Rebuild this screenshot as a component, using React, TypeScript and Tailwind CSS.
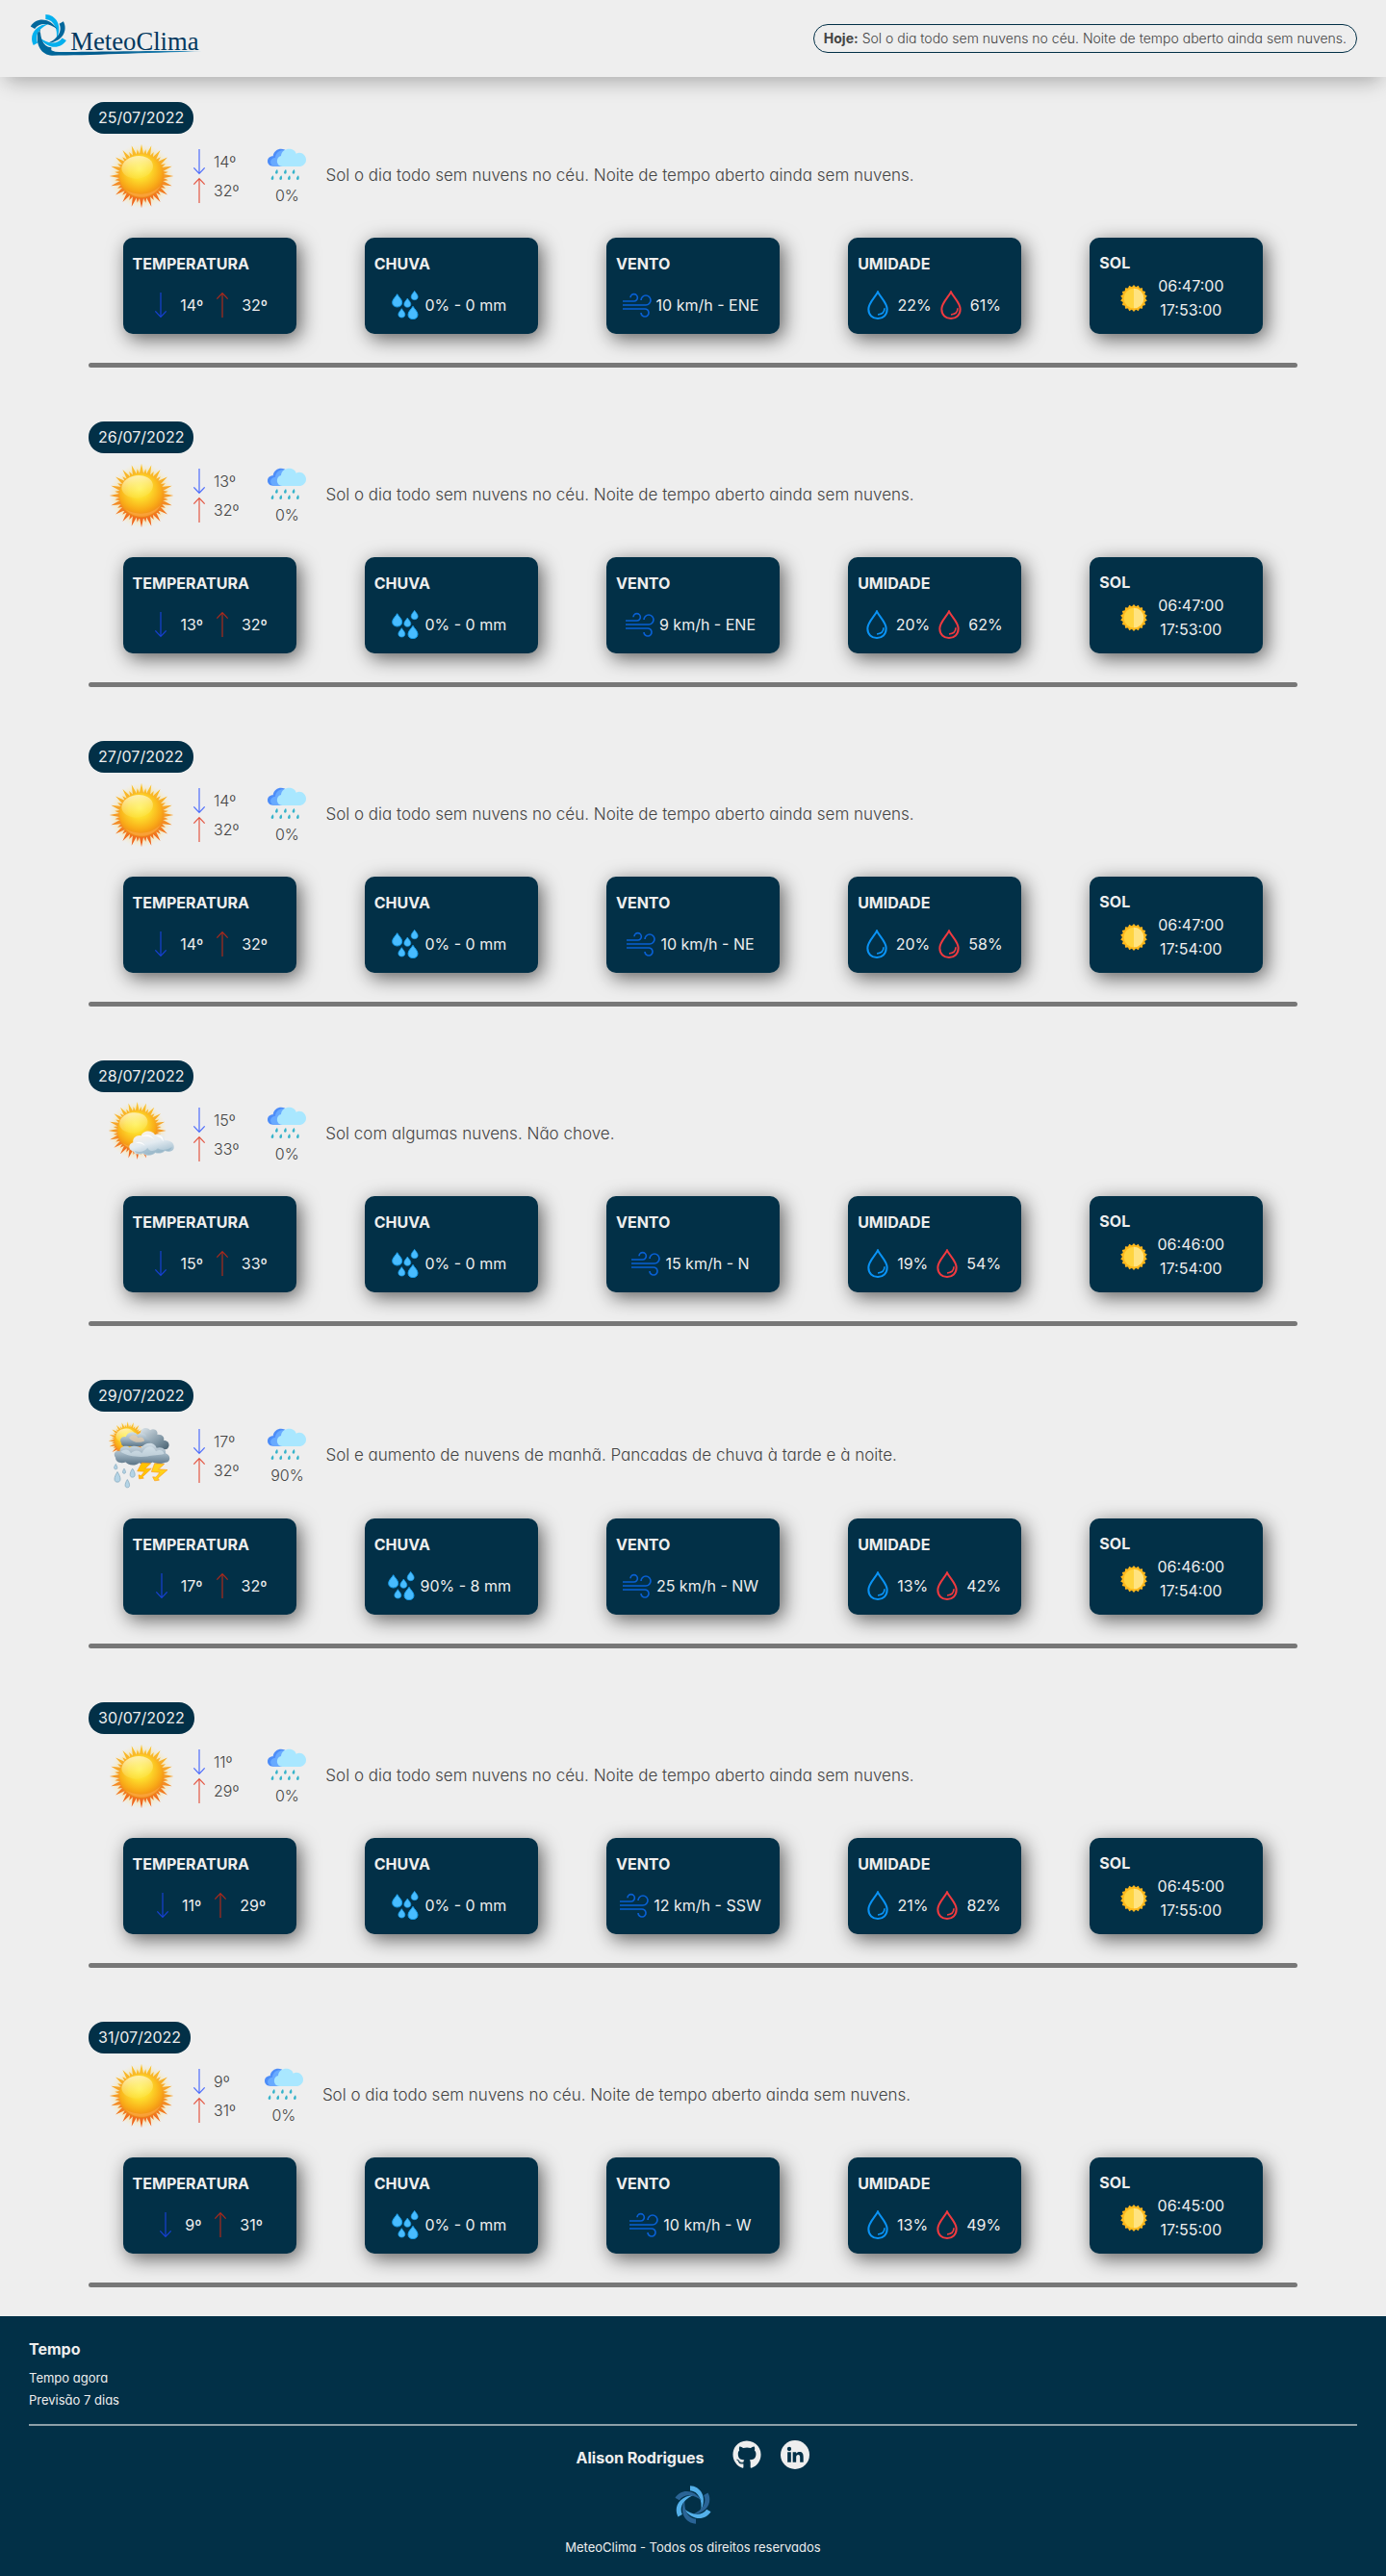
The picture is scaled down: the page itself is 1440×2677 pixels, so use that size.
import { FaGithub } from "react-icons/fa";

type Sky = "sun" | "cloudy" | "storm";
type Day = {
  date: string;
  sky: Sky;
  min: string;
  max: string;
  chance: string;
  rain: string;
  text: string;
  wind: string;
  humMin: string;
  humMax: string;
  sunrise: string;
  sunset: string;
};

const CLEAR = "Sol o dia todo sem nuvens no céu. Noite de tempo aberto ainda sem nuvens.";

const days: Day[] = [
  { date: "25/07/2022", sky: "sun", min: "14º", max: "32º", chance: "0%", rain: "0 mm", text: CLEAR, wind: "10 km/h - ENE", humMin: "22%", humMax: "61%", sunrise: "06:47:00", sunset: "17:53:00" },
  { date: "26/07/2022", sky: "sun", min: "13º", max: "32º", chance: "0%", rain: "0 mm", text: CLEAR, wind: "9 km/h - ENE", humMin: "20%", humMax: "62%", sunrise: "06:47:00", sunset: "17:53:00" },
  { date: "27/07/2022", sky: "sun", min: "14º", max: "32º", chance: "0%", rain: "0 mm", text: CLEAR, wind: "10 km/h - NE", humMin: "20%", humMax: "58%", sunrise: "06:47:00", sunset: "17:54:00" },
  { date: "28/07/2022", sky: "cloudy", min: "15º", max: "33º", chance: "0%", rain: "0 mm", text: "Sol com algumas nuvens. Não chove.", wind: "15 km/h - N", humMin: "19%", humMax: "54%", sunrise: "06:46:00", sunset: "17:54:00" },
  { date: "29/07/2022", sky: "storm", min: "17º", max: "32º", chance: "90%", rain: "8 mm", text: "Sol e aumento de nuvens de manhã. Pancadas de chuva à tarde e à noite.", wind: "25 km/h - NW", humMin: "13%", humMax: "42%", sunrise: "06:46:00", sunset: "17:54:00" },
  { date: "30/07/2022", sky: "sun", min: "11º", max: "29º", chance: "0%", rain: "0 mm", text: CLEAR, wind: "12 km/h - SSW", humMin: "21%", humMax: "82%", sunrise: "06:45:00", sunset: "17:55:00" },
  { date: "31/07/2022", sky: "sun", min: "9º", max: "31º", chance: "0%", rain: "0 mm", text: CLEAR, wind: "10 km/h - W", humMin: "13%", humMax: "49%", sunrise: "06:45:00", sunset: "17:55:00" },
];

const BLADE = "M-9 -59 C22 -58 46 -26 25 18 C30 -12 18 -42 -9 -44 Z";

function Swirl({ light, dark }: { light: string; dark: string }) {
  return (
    <g>
      {[0, 60, 120, 180, 240, 300].map((a, i) => (
        <path key={a} d={BLADE} fill={i % 2 ? dark : light} transform={`rotate(${a})`} />
      ))}
    </g>
  );
}

function Logo() {
  return (
    <svg viewBox="0 0 540 132" className="h-11 w-[180px]" role="img" aria-label="MeteoClima">
      <defs>
        <linearGradient id="tail" x1="0" x2="1">
          <stop offset="0" stopColor="#006a9e" />
          <stop offset="0.4" stopColor="#015a8c" />
          <stop offset="1" stopColor="#2b8fc0" />
        </linearGradient>
      </defs>
      <g transform="translate(61 62)">
        <Swirl light="#05b0ee" dark="#02679b" />
      </g>
      <path d="M28 58 C20 100 40 130 72 131 C180 131 360 123 540 118 C400 115 200 120 94 120 C62 120 38 96 36 60 Z" fill="url(#tail)" />
      <text x="130" y="113" fontSize="80" fill="#04395f" fontFamily="'Liberation Serif', serif">
        MeteoClima
      </text>
    </svg>
  );
}

function SunDefs() {
  return (
    <svg className="absolute size-0" aria-hidden="true">
      <defs>
        <radialGradient id="sunBody" cx="0.46" cy="0.34" r="0.68">
          <stop offset="0" stopColor="#fff04a" />
          <stop offset="0.35" stopColor="#fddb2c" />
          <stop offset="0.7" stopColor="#f9ad18" />
          <stop offset="1" stopColor="#ee7d16" />
        </radialGradient>
        <linearGradient id="sunRays" gradientUnits="userSpaceOnUse" x1="0" x2="0" y1="-100" y2="100">
          <stop offset="0" stopColor="#fbc62a" />
          <stop offset="0.5" stopColor="#f59a26" />
          <stop offset="1" stopColor="#ee5a1c" />
        </linearGradient>
        <radialGradient id="sunGlow">
          <stop offset="0.6" stopColor="#ffd24a" stopOpacity="0.7" />
          <stop offset="1" stopColor="#ffe9a0" stopOpacity="0" />
        </radialGradient>
        <linearGradient id="sunShine" x1="0" x2="0" y1="0" y2="1">
          <stop offset="0" stopColor="#ffffff" stopOpacity="0.65" />
          <stop offset="1" stopColor="#fff27a" stopOpacity="0.15" />
        </linearGradient>
        <linearGradient id="whiteCloud" x1="0.2" x2="0.7" y1="0" y2="1">
          <stop offset="0" stopColor="#fdf3e6" />
          <stop offset="0.5" stopColor="#e3ebf1" />
          <stop offset="1" stopColor="#9fbccd" />
        </linearGradient>
        <linearGradient id="greyCloud" x1="0" x2="0" y1="0" y2="1">
          <stop offset="0" stopColor="#d3dfe7" />
          <stop offset="0.5" stopColor="#9fb3c1" />
          <stop offset="1" stopColor="#5a7486" />
        </linearGradient>
        <linearGradient id="backCloud" x1="0" x2="1" y1="0" y2="1">
          <stop offset="0" stopColor="#dbe4ea" />
          <stop offset="0.6" stopColor="#8298a6" />
          <stop offset="1" stopColor="#455e6d" />
        </linearGradient>
      </defs>
    </svg>
  );
}

const RAYS = Array.from({ length: 20 }, (_, i) => i * 18);

function Sun() {
  return (
    <g>
      <circle r="100" fill="url(#sunGlow)" />
      <path
        fill="url(#sunRays)"
        d={RAYS.map((deg) => {
          const p = (r: number, d: number) => {
            const a = ((deg + d) * Math.PI) / 180;
            return `${(r * Math.sin(a)).toFixed(1)} ${(-r * Math.cos(a)).toFixed(1)}`;
          };
          return `M${p(66, -6)} L${p(100, 0)} L${p(66, 6)} Z M${p(66, 4)} L${p(84, 9)} L${p(66, 14)} Z`;
        }).join(" ")}
      />
      <circle r="69" fill="url(#sunBody)" />
      <ellipse cx="-9" cy="-29" rx="49" ry="35" fill="url(#sunShine)" transform="rotate(-8)" />
      <path d="M-50 43 C-20 78 40 72 62 26 C40 54 -8 68 -50 43 Z" fill="#ffb257" opacity="0.5" />
    </g>
  );
}

function SkyIcon({ sky }: { sky: Sky }) {
  if (sky === "sun")
    return (
      <svg viewBox="-105 -105 210 210" className="h-[74px] w-[70px]" aria-hidden="true">
        <Sun />
      </svg>
    );
  if (sky === "cloudy")
    return (
      <svg viewBox="0 0 210 210" className="h-[74px] w-[70px]" aria-hidden="true">
        <g transform="translate(92 93) scale(0.9)">
          <Sun />
        </g>
        <path
          d="M80 158 C62 154 63 133 79 130 C76 114 92 105 104 109 C108 93 137 88 147 106 C163 97 180 108 177 123 C196 121 208 133 206 146 C205 157 190 161 178 156 C170 165 155 165 148 162 C137 174 116 171 110 164 C98 169 84 167 80 158 Z"
          fill="url(#whiteCloud)"
        />
        <path d="M104 112 C120 100 138 106 145 122 C138 112 120 108 104 112 Z M150 110 C165 104 174 114 173 127 C168 116 160 111 150 110 Z M84 133 C96 124 110 128 116 140 C106 132 96 130 84 133 Z" fill="#ffffff" opacity="0.85" />
        <path d="M84 156 C100 164 118 156 124 146 C128 158 146 160 156 148 C164 156 186 154 200 144 C196 158 184 158 177 154 C168 163 154 163 148 160 C136 171 118 169 110 162 C98 167 88 164 84 156 Z" fill="#86a9be" opacity="0.5" />
      </svg>
    );
  return (
    <svg viewBox="0 0 210 210" className="h-[77px] w-[70px]" aria-hidden="true">
      <g transform="translate(62 59) scale(0.6)">
        <Sun />
      </g>
      <path d="M102 34 C102 20 122 14 132 26 C146 18 158 30 154 40 C170 38 178 50 174 58 C190 58 196 74 186 84 C170 92 146 82 130 72 C112 62 104 48 102 34 Z" fill="url(#backCloud)" />
      <path d="M42 66 C34 54 44 44 56 47 C60 32 84 26 92 40 C108 30 124 40 120 52 C134 52 138 68 126 72 C106 80 72 78 62 76 C52 80 42 76 42 66 Z" fill="url(#greyCloud)" />
      <path d="M66 50 C74 36 90 40 94 50 C106 44 114 52 114 60 C100 68 76 64 66 50 Z" fill="#e9cfae" opacity="0.7" />
      <path d="M24 112 C14 98 26 88 38 92 C36 78 56 70 68 80 C82 72 98 78 104 82 C116 62 146 62 152 82 C170 76 184 88 180 98 C198 104 196 126 180 127 C164 134 144 130 140 126 C124 136 104 132 98 128 C84 140 60 134 56 126 C40 132 24 126 24 112 Z" fill="url(#greyCloud)" />
      <path d="M40 94 C54 82 66 86 72 98 C84 86 98 88 106 98 C118 72 140 70 150 92 C164 84 174 92 176 100 C160 106 138 104 124 108 C96 112 62 108 40 94 Z" fill="#dbe7ee" opacity="0.6" />
      <path d="M106 128 L134 130 L116 146 L136 146 L108 172 L112 176 L98 178 L96 166 L104 168 L114 155 L92 154 Z" fill="#ffc400" stroke="#ff9a1a" strokeWidth="2" />
      <path d="M146 130 L176 132 L158 148 L186 150 L156 176 L160 182 L146 184 L140 172 L150 173 L162 158 L136 156 Z" fill="#ffd21a" stroke="#ff9a1a" strokeWidth="2" />
      <g fill="#b4d4e6" stroke="#7fa3b8" strokeWidth="2">
        <path d="M25 132 C31 142 31 148 25 148 C18 148 18 142 25 132 Z" />
        <path d="M30 156 C42 174 42 188 30 188 C18 188 18 174 30 156 Z" />
        <path d="M51 146 C57 156 57 161 51 161 C45 161 45 156 51 146 Z" />
        <path d="M77 146 C87 160 87 173 77 173 C67 173 67 160 77 146 Z" />
        <path d="M61 180 C70 194 70 205 61 205 C52 205 52 194 61 180 Z" />
      </g>
    </svg>
  );
}

function Arrow({ up = false }: { up?: boolean }) {
  const c = up ? "#e0280f" : "#1e46ff";
  return (
    <svg viewBox="0 0 90 90" className="size-[30px] shrink-0" fill="none" stroke={c} aria-hidden="true">
      <g transform={up ? "rotate(180 45 45)" : undefined}>
        <path d="M45 6 V80" strokeWidth="5" opacity="0.55" />
        <path d="M28 64 L45 82 L62 64" strokeWidth="4" opacity="0.75" />
      </g>
    </svg>
  );
}

function RainCloud() {
  return (
    <svg viewBox="0 0 120 120" className="size-10" aria-hidden="true">
      <g transform="translate(0 12)">
        <path d="M16 53 C-6 52 -5 22 17 22 C20 -2 50 -8 62 10 L62 53 Z" fill="#4d8df8" />
        <path d="M20 53 C4 48 6 28 24 26 C26 4 52 -2 64 10 L64 53 Z" fill="#68aaff" />
        <path d="M46 54 C26 54 24 24 42 21 C44 -6 84 -8 89 14 C104 6 120 18 120 33 C120 46 110 54 98 54 Z" fill="#a9e7ff" />
        <g fill="#36b3ca">
          {[[28, 63], [55, 63], [81, 63], [15, 82], [41, 82], [67, 82], [94, 82]].map(([x, y]) => (
            <path key={`${x}-${y}`} transform={`translate(${x} ${y})`} d="M2 0 C5 6 5 14 0 14 C-6 14 -5 6 2 0 Z" />
          ))}
        </g>
      </g>
    </svg>
  );
}

function RainDrops() {
  const drop = "M0 -20 C5 -11 15 -4 15 6 C15 15 8 20 0 20 C-8 20 -15 15 -15 6 C-15 -4 -5 -11 0 -20 Z";
  return (
    <svg viewBox="0 0 90 90" className="size-[30px] shrink-0" fill="#48bcff" stroke="#159be8" strokeWidth="3" aria-hidden="true">
      <path d={drop} transform="translate(20 31)" />
      <path d={drop} transform="translate(74 15) scale(0.7)" />
      <path d={drop} transform="translate(52 38) scale(0.7)" />
      <path d={drop} transform="translate(34 70) scale(0.7)" />
      <path d={drop} transform="translate(69 69)" />
    </svg>
  );
}

function Wind() {
  return (
    <svg viewBox="0 0 90 90" className="size-[30px] shrink-0" fill="none" stroke="#0960d4" strokeWidth="5" aria-hidden="true">
      <path d="M0 33 H35 A11 11 0 1 0 24 22" />
      <path d="M0 45 H72 A15 15 0 1 0 57 30" />
      <path d="M0 57 H68 A12 12 0 1 1 57 69" />
    </svg>
  );
}

function Humidity({ color }: { color: string }) {
  return (
    <svg viewBox="0 0 90 90" className="size-[30px] shrink-0" fill="none" stroke={color} strokeWidth="6" aria-hidden="true">
      <path d="M45 4 C38 20 16 38 16 58 C16 76 29 87 45 87 C61 87 74 76 74 58 C74 38 52 20 45 4 Z" />
      <path d="M66 55 C66 67 58 74 45 75" strokeWidth="5" />
    </svg>
  );
}

function SmallSun() {
  const pts = Array.from({ length: 36 }, (_, i) => {
    const r = i % 2 ? 36 : 42;
    const a = (i * Math.PI) / 18;
    return `${(45 + r * Math.sin(a)).toFixed(1)},${(45 - r * Math.cos(a)).toFixed(1)}`;
  }).join(" ");
  return (
    <svg viewBox="0 0 90 90" className="size-[30px] shrink-0" aria-hidden="true">
      <polygon points={pts} fill="#ffb81c" />
      <circle cx="45" cy="45" r="31" fill="#ffd43f" />
      <path d="M45 14 A31 31 0 0 1 45 76 Z" fill="#ffe380" />
    </svg>
  );
}

function Card({ title, children }: { title: string; children: React.ReactNode }) {
  return (
    <article className="h-[100px] w-[180px] rounded-[10px] bg-[#023047] pt-[15px] text-base text-[#eee] shadow-[4px_5px_20px_rgba(0,0,0,0.6)]">
      <h3 className="px-2.5 leading-6 font-bold">{title}</h3>
      <div className="mt-4 flex h-[30px] items-center justify-center whitespace-nowrap">{children}</div>
    </article>
  );
}

function DaySection({ day }: { day: Day }) {
  return (
    <section>
      <h2 className="w-fit rounded-2xl bg-[#023047] px-2.5 text-base leading-[33px] text-[#eee]">{day.date}</h2>
      <div className="mt-[7px] flex items-center pl-5 text-base font-light text-[#444]">
        <SkyIcon sky={day.sky} />
        <div className="ml-2.5">
          <p className="flex h-[30px] items-center">
            <Arrow />
            {day.min}
          </p>
          <p className="flex h-[30px] items-center">
            <Arrow up />
            {day.max}
          </p>
        </div>
        <div className="ml-[30px] flex flex-col items-center">
          <RainCloud />
          <p className="leading-6">{day.chance}</p>
        </div>
        <p className="ml-5 text-[17px]">{day.text}</p>
      </div>
      <div className="mt-[27px] flex justify-around">
        <Card title="TEMPERATURA">
          <Arrow />
          <span className="px-[5px]">{day.min}</span>
          <Arrow up />
          <span className="px-[5px]">{day.max}</span>
        </Card>
        <Card title="CHUVA">
          <RainDrops />
          <span className="px-[5px]">
            {day.chance} - {day.rain}
          </span>
        </Card>
        <Card title="VENTO">
          <Wind />
          <span className="px-[5px]">{day.wind}</span>
        </Card>
        <Card title="UMIDADE">
          <Humidity color="#0a93f5" />
          <span className="px-[5px]">{day.humMin}</span>
          <Humidity color="#f03a40" />
          <span className="px-[5px]">{day.humMax}</span>
        </Card>
        <article className="h-[100px] w-[180px] rounded-[10px] bg-[#023047] pt-[14px] text-base text-[#eee] shadow-[4px_5px_20px_rgba(0,0,0,0.6)]">
          <h3 className="px-2.5 leading-6 font-bold">SOL</h3>
          <div className="flex items-center justify-center">
            <SmallSun />
            <p className="px-2.5 text-center leading-[25px]">
              {day.sunrise}
              <br />
              {day.sunset}
            </p>
          </div>
        </article>
      </div>
      <hr className="mt-[30px] h-[5px] rounded-full border-0 bg-[#777]" />
    </section>
  );
}

export default function App() {
  return (
    <div className="bg-[#eee] font-['Inter',sans-serif] [font-feature-settings:'cv11']">
      <SunDefs />
      <header className="flex h-20 items-center justify-between px-[30px] shadow-[0_10px_20px_-6px_rgba(0,0,0,0.3)]">
        <a href="#" className="-mt-2">
          <Logo />
        </a>
        <p className="rounded-2xl border border-[#023047] px-2.5 text-sm leading-7 font-light text-[#444]">
          <strong className="mr-1 font-bold">Hoje:</strong>
          {CLEAR}
        </p>
      </header>
      <main className="mx-auto flex w-[calc(100%-184px)] flex-col gap-14 pt-[26px] pb-[30px]">
        {days.map((d) => (
          <DaySection key={d.date} day={d} />
        ))}
      </main>
      <footer className="bg-[#023047] px-[30px] pt-[22px] pb-[18px] text-[#eee]">
        <nav className="text-[13px] leading-[23px]">
          <h3 className="mb-[7px] text-base leading-6 font-bold">Tempo</h3>
          <ul>
            <li>
              <a href="#">Tempo agora</a>
            </li>
            <li>
              <a href="#">Previsão 7 dias</a>
            </li>
          </ul>
        </nav>
        <hr className="mt-[13px] h-0.5 border-0 bg-[#8c9fa8]" />
        <div className="mt-[15px] flex h-[30px] items-center justify-center">
          <p className="mr-[30px] pt-1.5 text-base leading-6 font-bold">Alison Rodrigues</p>
          <a href="#" aria-label="GitHub">
            <FaGithub className="size-[30px]" />
          </a>
          <a href="#" aria-label="LinkedIn" className="ml-5">
            <svg viewBox="0 0 90 90" className="size-[30px]">
              <circle cx="45" cy="45" r="45" fill="#eee" />
              <g fill="#023047">
                <circle cx="27" cy="27" r="6.5" />
                <path d="M21.500 37 H32.500 V68 H21.500 Z M38 37 H48.500 V41.500 C51 38 55 36 59 36 C68 36 71 42 71 51 V68 H60.500 V53 C60.500 48 59 45 55 45 C51 45 48.500 48 48.500 53 V68 H38 Z" />
              </g>
            </svg>
          </a>
        </div>
        <svg viewBox="-60 -60 120 120" className="mx-auto mt-[17px] size-10" aria-hidden="true">
          <Swirl light="#54b0ea" dark="#2a6496" />
        </svg>
        <p className="mt-3 text-center text-[13px] leading-6">MeteoClima - Todos os direitos reservados</p>
      </footer>
    </div>
  );
}
